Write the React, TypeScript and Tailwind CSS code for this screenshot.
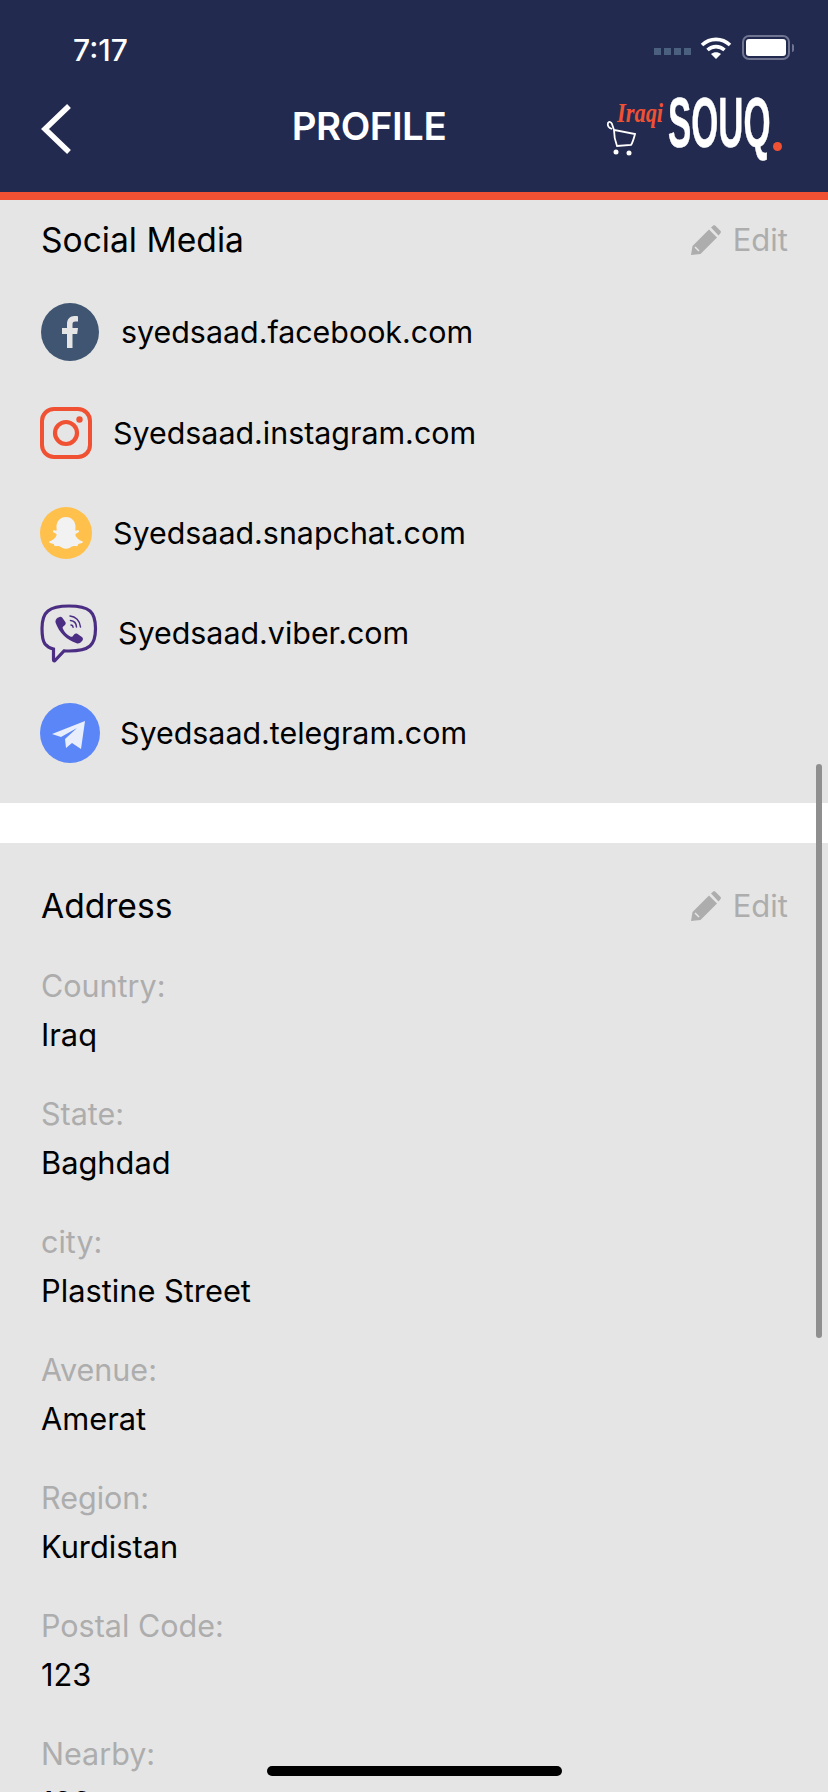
import { ReactNode } from 'react';

const SOCIALS = [
  { key: 'facebook', text: 'syedsaad.facebook.com', textGap: 'ml-[22px]' },
  { key: 'instagram', text: 'Syedsaad.instagram.com', textGap: 'ml-[21px]' },
  { key: 'snapchat', text: 'Syedsaad.snapchat.com', textGap: 'ml-[21px]' },
  { key: 'viber', text: 'Syedsaad.viber.com', textGap: 'ml-[20px]' },
  { key: 'telegram', text: 'Syedsaad.telegram.com', textGap: 'ml-[20px]' },
];

const ADDRESS = [
  { label: 'Country:', value: 'Iraq' },
  { label: 'State:', value: 'Baghdad' },
  { label: 'city:', value: 'Plastine Street' },
  { label: 'Avenue:', value: 'Amerat' },
  { label: 'Region:', value: 'Kurdistan' },
  { label: 'Postal Code:', value: '123' },
  { label: 'Nearby:', value: '123' },
];

function SocialIcon({ name }: { name: string }): ReactNode {
  if (name === 'facebook') {
    return (
      <svg width="58" height="58" viewBox="0 0 58 58" className="ml-[1px]">
        <circle cx="29" cy="29" r="29" fill="#3f5572" />
        <path d="M26 45V31h-5v-6h5v-4c0-5 3-8 7.500-8 1.500 0 3 .1 3.500.2v5.300h-2.600c-2.400 0-2.900 1.200-2.900 2.900V25h5.500l-.8 6h-4.700v14z" fill="#e5e5e5" />
      </svg>
    );
  }
  if (name === 'instagram') {
    return (
      <svg width="52" height="52" viewBox="0 0 52 52" fill="none" stroke="#f05133">
        <rect x="2" y="2" width="48" height="48" rx="12" strokeWidth="4" />
        <circle cx="26" cy="26" r="11" strokeWidth="4.200" />
        <circle cx="39.500" cy="12.500" r="3.200" fill="#f05133" stroke="none" />
      </svg>
    );
  }
  if (name === 'snapchat') {
    return (
      <svg width="52" height="52" viewBox="0 0 52 52">
        <circle cx="26" cy="26" r="26" fill="#ffc04c" />
        <path d="M26 10c6 0 9.500 4.500 9.500 9.500 0 1.500-.1 3-.2 4 .8.300 2-.5 2.800-.3 1 .2 1.300 1.300.5 2-1 .9-3.200 1.300-3.300 2.300 0 2 3.200 5.600 7 6.800.8.300.7 1.100 0 1.500-1.300.7-3 .8-4 1.300-.5.400-.3 1.700-1 2-1.200.4-3-.3-4.500.1-1.900.5-3.500 2.500-6.800 2.500s-4.900-2-6.800-2.500c-1.500-.4-3.300.3-4.500-.1-.7-.3-.5-1.600-1-2-1-.5-2.700-.6-4-1.300-.7-.4-.8-1.200 0-1.500 3.800-1.200 7-4.800 7-6.800-.1-1-2.300-1.400-3.300-2.300-.8-.7-.5-1.800.5-2 .8-.2 2 .6 2.800.3-.1-1-.2-2.500-.2-4C16.500 14.500 20 10 26 10z" fill="#f2f2f2" />
      </svg>
    );
  }
  if (name === 'viber') {
    return (
      <svg width="58" height="60" viewBox="0 0 58 60" fill="none" stroke="#4b2e83" className="mt-[2px]">
        <path d="M29 2c9 0 16 .8 21 5 4 3.500 5.500 9 5.500 17.500S54 38.500 50 42c-5 4.200-12 5-21 5-2 0-4-.1-5-.2L15 56.500c-.6.700-1.500.3-1.500-.6V45c-4-1-6.500-2.500-8.500-5-2.500-3.500-3-8.500-3-15.500S3.500 10.500 8 7c5-4.200 12-5 21-5z" strokeWidth="3.200" />
        <path d="M18.500 13.500c1.500-1 3-.8 4 .5l2.700 3.800c.9 1.300.6 2.600-.5 3.500l-1.700 1.400c-.5.500-.5 1.200-.2 1.900 1.700 3.900 4.400 6.500 8 8.100.8.300 1.400.2 1.900-.4l1.400-1.700c.9-1.100 2.300-1.300 3.500-.5l4.300 3c1.200.9 1.400 2.400.4 3.700-1.500 2-3.600 3.200-5.700 2.500-10-3.500-17.400-10.600-21-20.600-.6-2 .5-3.900 2.400-5.200z" fill="#4b2e83" stroke="none" />
        <path d="M30 12c5.500.4 10 4.500 10.500 11M30.500 16.500c3.500.3 5.800 2.800 6 6.500M31 21c1.300.1 2 .9 2.100 2.200" strokeWidth="1.500" strokeLinecap="round" />
      </svg>
    );
  }
  return (
    <svg width="60" height="60" viewBox="0 0 60 60">
      <circle cx="30" cy="30" r="30" fill="#5b86f7" />
      <path d="M12 31 45 18 41 46 32 40 26 45 25 36 37 25 21 34z" fill="#e9eefc" />
    </svg>
  );
}

function PencilIcon() {
  return (
    <svg width="30" height="30" viewBox="0 0 30 30" className="mr-[12px]">
      <path d="M0 30l1.500-9L18 4.500l8 8L9.500 29zM20 2.500 22 .800c.8-.6 1.700-.6 2.400 0l5 5c.7.700.7 1.600 0 2.400L27.500 10.500z" fill="#adadad" />
      <path d="M4 22l4 4" stroke="#e5e5e5" strokeWidth="1.600" />
    </svg>
  );
}

function SectionTitle({ title }: { title: string }) {
  return (
    <div className="flex items-center justify-between pl-[41px] pr-[40px]">
      <span className="text-[33.600px] leading-[40px] text-black">{title}</span>
      <span className="flex items-center text-[31px] leading-[40px] text-[#adadad]">
        <PencilIcon />
        Edit
      </span>
    </div>
  );
}

function StatusBar() {
  return (
    <div className="flex h-[84px] items-start justify-between pl-[73px] pr-[34px] pt-[31px]">
      <span className="text-[30px] font-medium leading-[38px] text-white">7:17</span>
      <div className="flex items-center pt-[4px]">
        <div className="mr-[8px] mt-[8px] flex gap-[3px]">
          <span className="h-[7px] w-[7px] bg-[#4b5f7e]" />
          <span className="h-[7px] w-[7px] bg-[#4b5f7e]" />
          <span className="h-[7px] w-[7px] bg-[#4b5f7e]" />
          <span className="h-[7px] w-[7px] bg-[#4b5f7e]" />
        </div>
        <svg width="34" height="24" viewBox="0 0 32 24" fill="none" stroke="white" strokeWidth="3.600">
          <path d="M2 9c8-7.500 20-7.500 28 0M7.500 14c5-4.500 12-4.500 17 0" />
          <path d="M16 23l-5-5c3-2.400 7-2.400 10 0z" fill="white" stroke="none" />
        </svg>
        <div className="ml-[9px] flex items-center">
          <div className="flex h-[25px] w-[48px] items-center justify-center rounded-[7px] border-2 border-[#6f7591]">
            <div className="h-[17px] w-[40px] rounded-[3px] bg-white" />
          </div>
          <div className="ml-[2px] h-[8px] w-[2px] rounded-r-sm bg-[#6f7591]" />
        </div>
      </div>
    </div>
  );
}

function Logo() {
  return (
    <div className="relative h-[60px] w-[180px] shrink-0">
      <svg width="32" height="38" viewBox="0 0 32 36" fill="none" stroke="white" strokeWidth="1.800" className="absolute left-[0px] top-[19px]">
        <path d="M6 10C3 9 1 7 2 4c1-2 3-1 4 1l2 6 21 4c-1 4-2 8-4 11l-14 1c-2-5-3-10-3-16" />
        <circle cx="10" cy="33" r="2.500" fill="white" stroke="none" />
        <circle cx="23" cy="34" r="2.500" fill="white" stroke="none" />
      </svg>
      <span className="absolute left-[11px] top-[-3px] origin-left scale-x-[0.8] font-['Liberation_Serif',serif] text-[28px] font-bold italic leading-[34px] text-[#f05133]">
        Iraqi
      </span>
      <span className="absolute left-[62px] top-[-9px] origin-left scale-x-[0.49] whitespace-nowrap font-['Liberation_Sans',sans-serif] text-[71px] font-bold leading-[66px] text-white [-webkit-text-stroke:0.5px_white]">
        SOUQ
      </span>
      <span className="absolute left-[167px] top-[43px] h-[9px] w-[9px] rounded-full bg-[#f05133]" />
    </div>
  );
}

export default function App() {
  return (
    <div className="relative h-[1792px] w-[828px] overflow-hidden bg-[#e5e5e5] font-['Inter',sans-serif]">
      <header className="h-[200px] border-b-[8px] border-[#f05133] bg-[#232a4f]">
        <StatusBar />
        <div className="flex h-[60px] items-center justify-between mt-[15px] pl-[40px] pr-[42px]">
          <svg width="32" height="50" viewBox="0 0 32 50" fill="none" stroke="white" strokeWidth="5.500">
            <path d="M29 2 5 25l24 23" />
          </svg>
          <h1 className="mb-[7px] ml-[60px] text-[38.500px] font-semibold leading-[44px] tracking-[-0.5px] text-white">PROFILE</h1>
          <Logo />
        </div>
      </header>

      <section className="h-[603px] bg-[#e5e5e5] pt-[20px]">
        <SectionTitle title="Social Media" />
        <ul className="mt-[23px] flex flex-col pl-[40px]">
          {SOCIALS.map((item) => (
            <li key={item.key} className="flex h-[100px] items-center first:pb-[2px]">
              <SocialIcon name={item.key} />
              <span className={`${item.textGap} text-[30.400px] leading-[38px] text-black`}>{item.text}</span>
            </li>
          ))}
        </ul>
      </section>

      <div className="h-[40px] bg-white" />

      <section className="pt-[43px]">
        <SectionTitle title="Address" />
        <dl className="mt-[41px] flex flex-col gap-[41px] pl-[41px]">
          {ADDRESS.map((row) => (
            <div key={row.label} className="flex flex-col">
              <dt className="text-[30.500px] leading-[38px] text-[#adadad]">{row.label}</dt>
              <dd className="mt-[11px] text-[30.800px] leading-[38px] text-black">{row.value}</dd>
            </div>
          ))}
        </dl>
      </section>

      {/* scroll indicator and home bar sit over the content */}
      <div className="absolute left-[816px] top-[764px] h-[574px] w-[6px] rounded-full bg-[#8f8f8f]" />
      <div className="absolute left-[267px] top-[1766px] h-[10px] w-[295px] rounded-full bg-black" />
    </div>
  );
}
